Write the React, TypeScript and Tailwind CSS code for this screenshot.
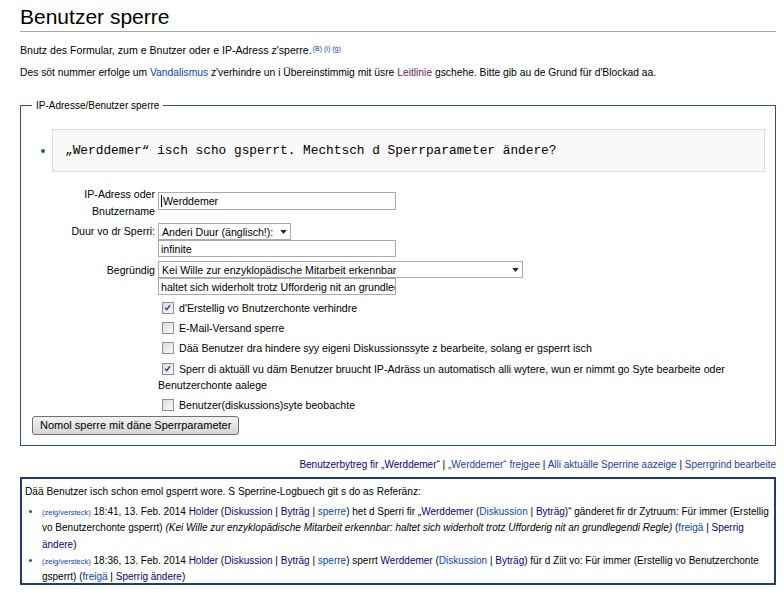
import * as React from "react";

const link = "text-[#0645ad]";
const visited = "text-[#0b0080]";

function Check({ checked }: { checked?: boolean }) {
    return (
        <span className="relative ml-[4px] mr-[5px] inline-block h-[12px] w-[12px] border border-[#8f8f8f] bg-gradient-to-br from-[#dcdcdc] to-[#fafafa] align-[-2px]">
            {checked && (
                <svg viewBox="0 0 12 12" className="absolute left-0 top-0 h-[10px] w-[10px]">
                    <path d="M2.5 5.5 L4.5 8 L8.5 2.5" fill="none" stroke="#1c3f8a" strokeWidth="1.6" />
                </svg>
            )}
        </span>
    );
}

function Caret() {
    return (
        <svg viewBox="0 0 8 5" className="h-[4px] w-[7px] shrink-0">
            <path d="M0 0 H8 L4 5 Z" fill="#222" />
        </svg>
    );
}

export default function App() {
    return (
        <div className="min-h-[600px] bg-white pl-[20px] pr-[8px] pt-[3px] font-['Liberation_Sans',Arial,sans-serif] text-[10.3px] text-black">
            <h1 className="border-b border-[#a2a9b1] pb-[1px] text-[21px] leading-[27px]">Benutzer sperre</h1>

            <p className="mt-[11px] text-[10.6px] leading-[14px]">
                Bnutz des Formular, zum e Bnutzer oder e IP-Adress z'sperre.
                <sup className={`ml-[1px] text-[7px] ${link}`}>(B) (i) (g)</sup>
            </p>
            <p className="mt-[9px] leading-[14px]">
                Des söt nummer erfolge um <span className={link}>Vandalismus</span> z'verhindre un i Übereinstimmig mit
                üsre <span className="text-[#6b2358]">Leitlinie</span> gschehe. Bitte gib au de Grund für d'Blockad aa.
            </p>

            <fieldset className="mt-[18px] border border-[#2d5285] pb-[10px] pl-[11px] pr-[10px] pt-[16px] text-[10.6px]">
                <legend className="px-[4px] text-[10px]">IP-Adresse/Benutzer sperre</legend>

                <ul className="pl-[20px]">
                    <li className="flex items-center">
                        <span className="-ml-[11px] mr-[7px] h-[4px] w-[4px] rounded-full bg-[#2d5285]" />
                        <div className="flex h-[43px] flex-1 items-center border border-[#dddddd] bg-[#f9f9f9] pl-[12px] font-['Liberation_Mono','Courier_New',monospace] text-[12.8px]">
                            „Werddemer“ isch scho gsperrt. Mechtsch d Sperrparameter ändere?
                        </div>
                    </li>
                </ul>

                <div className="mt-[14px] grid grid-cols-[123px_1fr] gap-x-[3px] leading-[16px]">
                    <div className="text-right leading-[16.5px]">
                        IP-Adress oder
                        <br />
                        Bnutzername
                    </div>
                    <div className="pt-[6px]">
                        <div className="flex h-[18px] w-[238px] items-center border border-[#ababab] px-[2px]">
                            <span className="mr-[1px] h-[12px] w-[1px] bg-black" />
                            Werddemer
                        </div>
                    </div>

                    <div className="mt-[4px] text-right">Duur vo dr Sperri:</div>
                    <div className="mt-[4px]">
                        <div className="flex h-[17px] w-[133px] items-center justify-between whitespace-nowrap border border-[#ababab] px-[3px]">
                            <span>Anderi Duur (änglisch!):</span>
                            <Caret />
                        </div>
                        <div className="flex h-[17px] w-[238px] items-center border border-[#ababab] px-[2px]">infinite</div>
                    </div>

                    <div className="mt-[5px] text-right">Begründig</div>
                    <div className="mt-[4px]">
                        <div className="flex h-[17px] w-[365px] items-center justify-between border border-[#ababab] px-[3px]">
                            <span>Kei Wille zur enzyklopädische Mitarbeit erkennbar</span>
                            <Caret />
                        </div>
                        <div className="flex h-[17px] w-[238px] items-center overflow-hidden whitespace-nowrap border border-[#ababab] px-[2px]">
                            haltet sich widerholt trotz Ufforderig nit an grundlegendi Regle
                        </div>
                    </div>

                    <div />
                    <div className="mt-[5px] flex flex-col gap-y-[3.7px] leading-[16.5px]">
                        <div>
                            <Check checked />
                            d'Erstellig vo Bnutzerchonte verhindre
                        </div>
                        <div>
                            <Check />
                            E-Mail-Versand sperre
                        </div>
                        <div>
                            <Check />
                            Dää Benutzer dra hindere syy eigeni Diskussionssyte z bearbeite, solang er gsperrt isch
                        </div>
                        <div>
                            <Check checked />
                            Sperr di aktuäll vu däm Benutzer bruucht IP-Adräss un automatisch alli wytere, wun er nimmt go Syte
                            bearbeite oder Benutzerchonte aalege
                        </div>
                        <div>
                            <Check />
                            Benutzer(diskussions)syte beobachte
                        </div>
                    </div>
                </div>

                <button className="mt-[2px] h-[19px] rounded-[3px] border border-[#707070] bg-gradient-to-b from-[#f2f2f2] to-[#d6d6d6] px-[7px] text-[11px] leading-[16px]">
                    Nomol sperre mit däne Sperrparameter
                </button>
            </fieldset>

            <div className={`mt-[12px] text-right text-[10px] leading-[14px] ${visited}`}>
                Benutzerbytreg fir „Werddemer“ <span className="text-black">|</span>{" "}
                <span className="text-[#1a3f9a]">„Werddemer“ frejgee</span> <span className="text-black">|</span>{" "}
                <span className="text-[#1a3f9a]">Alli aktuälle Sperrine aazeige</span> <span className="text-black">|</span>{" "}
                <span className="text-[#1a3f9a]">Sperrgrind bearbeite</span>
            </div>

            <div className="mt-[5px] border-2 border-[#1f3c6e] px-[3px] pb-0 pt-[5px] text-[10px] leading-[16.3px]">
                <p className="text-[10.2px]">Dää Benutzer isch schon emol gsperrt wore. S Sperrine-Logbuech git s do as Referänz:</p>
                <ul className="-mb-[3px] mt-[4px] list-disc pl-[17px] marker:text-[#2d5285]">
                    <li>
                        <span className={`text-[7.5px] leading-none ${link}`}>(zeig/versteck)</span> 18:41, 13. Feb. 2014{" "}
                        <span className={visited}>Holder</span> (<span className={visited}>Diskussion</span> |{" "}
                        <span className={visited}>Byträg</span> | <span className={link}>sperre</span>) het d Sperri fir „
                        <span className={visited}>Werddemer</span> (<span className={link}>Diskussion</span> |{" "}
                        <span className={visited}>Byträg</span>)“ gänderet fir dr Zytruum: Für immer (Erstellig vo Benutzerchonte
                        gsperrt){" "}
                        <i>(Kei Wille zur enzyklopädische Mitarbeit erkennbar: haltet sich widerholt trotz Ufforderig nit an grundlegendi Regle)</i>{" "}
                        (<span className={link}>freigä</span> | <span className={visited}>Sperrig ändere</span>)
                    </li>
                    <li>
                        <span className={`text-[7.5px] leading-none ${link}`}>(zeig/versteck)</span> 18:36, 13. Feb. 2014{" "}
                        <span className={visited}>Holder</span> (<span className={visited}>Diskussion</span> |{" "}
                        <span className={visited}>Byträg</span> | <span className={link}>sperre</span>) sperrt{" "}
                        <span className={visited}>Werddemer</span> (<span className={link}>Diskussion</span> |{" "}
                        <span className={visited}>Byträg</span>) für d Ziit vo: Für immer (Erstellig vo Benutzerchonte gsperrt) (
                        <span className={link}>freigä</span> | <span className={visited}>Sperrig ändere</span>)
                    </li>
                </ul>
            </div>
        </div>
    );
}
